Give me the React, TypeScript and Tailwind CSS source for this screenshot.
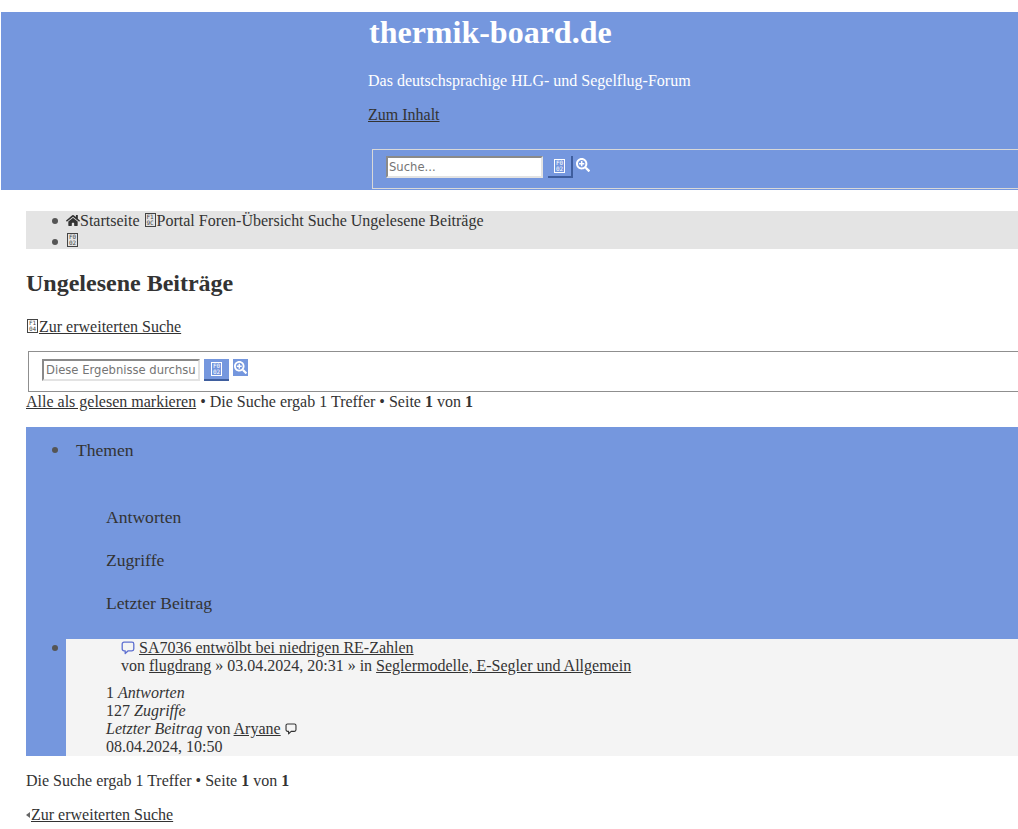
import React from "react";
import { FaHome, FaSearchPlus } from "react-icons/fa";

function Tofu({ a, b, className = "text-[#444]" }: { a: string; b: string; className?: string }) {
  return (
    <span className={`inline-flex flex-col items-center justify-center w-[11px] h-[14px] mx-px border border-current align-[7px] font-['DejaVu_Sans_Mono',monospace] text-[6px] leading-[6px] no-underline ${className}`}>
      <span>{a}</span>
      <span>{b}</span>
    </span>
  );
}

function Bubble({ className }: { className: string }) {
  return (
    <svg viewBox="0 0 14 14" className={className} fill="none" stroke="currentColor" strokeWidth="1.3" strokeLinejoin="round">
      <path d="M3 1.2h8a1.8 1.8 0 0 1 1.8 1.8v5a1.8 1.8 0 0 1-1.8 1.8H7.2L4.2 12.6V9.8H3A1.8 1.8 0 0 1 1.2 8V3A1.8 1.8 0 0 1 3 1.2z" />
    </svg>
  );
}

const link = "underline text-[#333]";
const bulletBase = "relative before:content-[''] before:absolute before:left-[-14px] before:w-[6px] before:h-[6px] before:rounded-full before:bg-[#555]";

export default function App() {
  return (
    <div className="w-[1018px] h-[829px] overflow-hidden bg-white font-['Liberation_Serif',serif] text-[16px] leading-[18px] text-[#333] pt-3">
      <header className="ml-px h-[178px] bg-[#7597de] pl-[367px] overflow-hidden">
        <h1 className="pt-[4px] pl-px text-[32px] leading-[32px] font-bold text-white">thermik-board.de</h1>
        <p className="mt-[21px] text-white leading-[24px]">Das deutschsprachige HLG- und Segelflug-Forum</p>
        <p className="mt-[10px] leading-[24px]"><a className={link}>Zum Inhalt</a></p>
        <div className="mt-[22px] ml-[4px] h-[40px] border border-[#d8d8d8] border-r-0 flex items-start pl-[13px] pt-[6px]">
          <input readOnly placeholder="Suche..." className="w-[157px] h-[22px] bg-white border-2 border-t-[#8a8a8a] border-l-[#8a8a8a] border-r-[#e3e3e3] border-b-[#e3e3e3] px-[1px] font-['DejaVu_Sans',sans-serif] text-[11.6px] placeholder:text-[#757575] outline-none" />
          <span className="ml-[5px] w-[25px] h-[22px] flex items-center justify-center bg-[#7597de] border-r-2 border-b-2 border-[#3f5e9e]">
            <Tofu a="F0" b="02" className="text-white" />
          </span>
          <FaSearchPlus className="ml-[3px] mt-[2px] w-[14px] h-[14px] text-white" />
        </div>
      </header>

      <main className="pl-[26px]">
        <nav className="mt-[21px] h-[38px] bg-[#e4e4e4]">
          <ul className="list-none pl-[40px]">
            <li className={`${bulletBase} before:top-[7px] h-[20px] leading-[20px]`}>
              <FaHome className="inline-block w-[14px] h-[13px] align-[-1px] text-[#333]" />
              Startseite{" "}
              <Tofu a="F1" b="9C" />Portal Foren-Übersicht Suche Ungelesene Beiträge
            </li>
            <li className={`${bulletBase} before:top-[8px] h-[18px] leading-[20px]`}><Tofu a="F0" b="02" /></li>
          </ul>
        </nav>

        <h2 className="mt-[20px] text-[24px] leading-[28px] font-bold">Ungelesene Beiträge</h2>

        <p className="mt-[21px] leading-[18px]">
          <a className={link}><Tofu a="F1" b="04" />Zur erweiterten Suche</a>
        </p>

        <div className="mt-[15px] ml-[2px] h-[41px] border border-[#8f8f8f] border-r-0 flex items-start pl-[13px] pt-[7px]">
          <input readOnly placeholder="Diese Ergebnisse durchsuchen" className="w-[158px] h-[22px] bg-white border-2 border-t-[#8a8a8a] border-l-[#8a8a8a] border-r-[#e3e3e3] border-b-[#e3e3e3] px-[2px] font-['DejaVu_Sans',sans-serif] text-[11.6px] placeholder:text-[#757575] outline-none" />
          <span className="ml-[4px] w-[25px] h-[22px] flex items-center justify-center bg-[#7597de] border-b-2 border-[#3f5e9e]">
            <Tofu a="F0" b="02" className="text-white" />
          </span>
          <span className="ml-[4px] w-[15px] h-[17px] bg-[#7597de] flex items-center justify-center">
            <FaSearchPlus className="w-[13px] h-[13px] text-white" />
          </span>
        </div>

        <p className="leading-[20px]">
          <a className={link}>Alle als gelesen markieren</a> • Die Suche ergab 1 Treffer • Seite <b>1</b> von <b>1</b>
        </p>

        <section className="mt-[15px] bg-[#7597de]">
          <ul className="list-none pl-[40px] text-[17.6px] leading-[20px]">
            <li className={`${bulletBase} before:top-[20px] pl-[10px] pt-[13px] h-[212px]`}>
              <div className="pb-[20px]">Themen</div>
              <dl className="pl-[30px] pt-[27px] flex flex-col gap-[23px]">
                <dd>Antworten</dd>
                <dd>Zugriffe</dd>
                <dd>Letzter Beitrag</dd>
              </dl>
            </li>
            <li className={`${bulletBase} before:top-[6px] text-[16px] leading-[18px] bg-[#f4f4f4] h-[117px]`}>
              <div className="pl-[55px]">
                <div className="flex items-center">
                  <Bubble className="w-[14px] h-[14px] text-[#5d6fd0] shrink-0 mr-[4px]" />
                  <a className={link}>SA7036 entwölbt bei niedrigen RE-Zahlen</a>
                </div>
                <div>von <a className={link}>flugdrang</a> » 03.04.2024, 20:31 » in <a className={link}>Seglermodelle, E-Segler und Allgemein</a></div>
              </div>
              <div className="pl-[40px] pt-[9px]">
                <div>1 <i>Antworten</i></div>
                <div>127 <i>Zugriffe</i></div>
                <div className="flex items-center">
                  <span><i>Letzter Beitrag</i> von <a className={link}>Aryane</a></span>
                  <Bubble className="ml-[4px] w-[12px] h-[12px] text-[#333]" />
                </div>
                <div>08.04.2024, 10:50</div>
              </div>
            </li>
          </ul>
        </section>

        <p className="mt-[16px]">Die Suche ergab 1 Treffer • Seite <b>1</b> von <b>1</b></p>
        <p className="mt-[16px] flex items-center">
          <span className="w-0 h-0 border-y-[3px] border-y-transparent border-r-[4px] border-r-[#666] mr-px"></span>
          <a className={link}>Zur erweiterten Suche</a>
        </p>
      </main>
    </div>
  );
}
